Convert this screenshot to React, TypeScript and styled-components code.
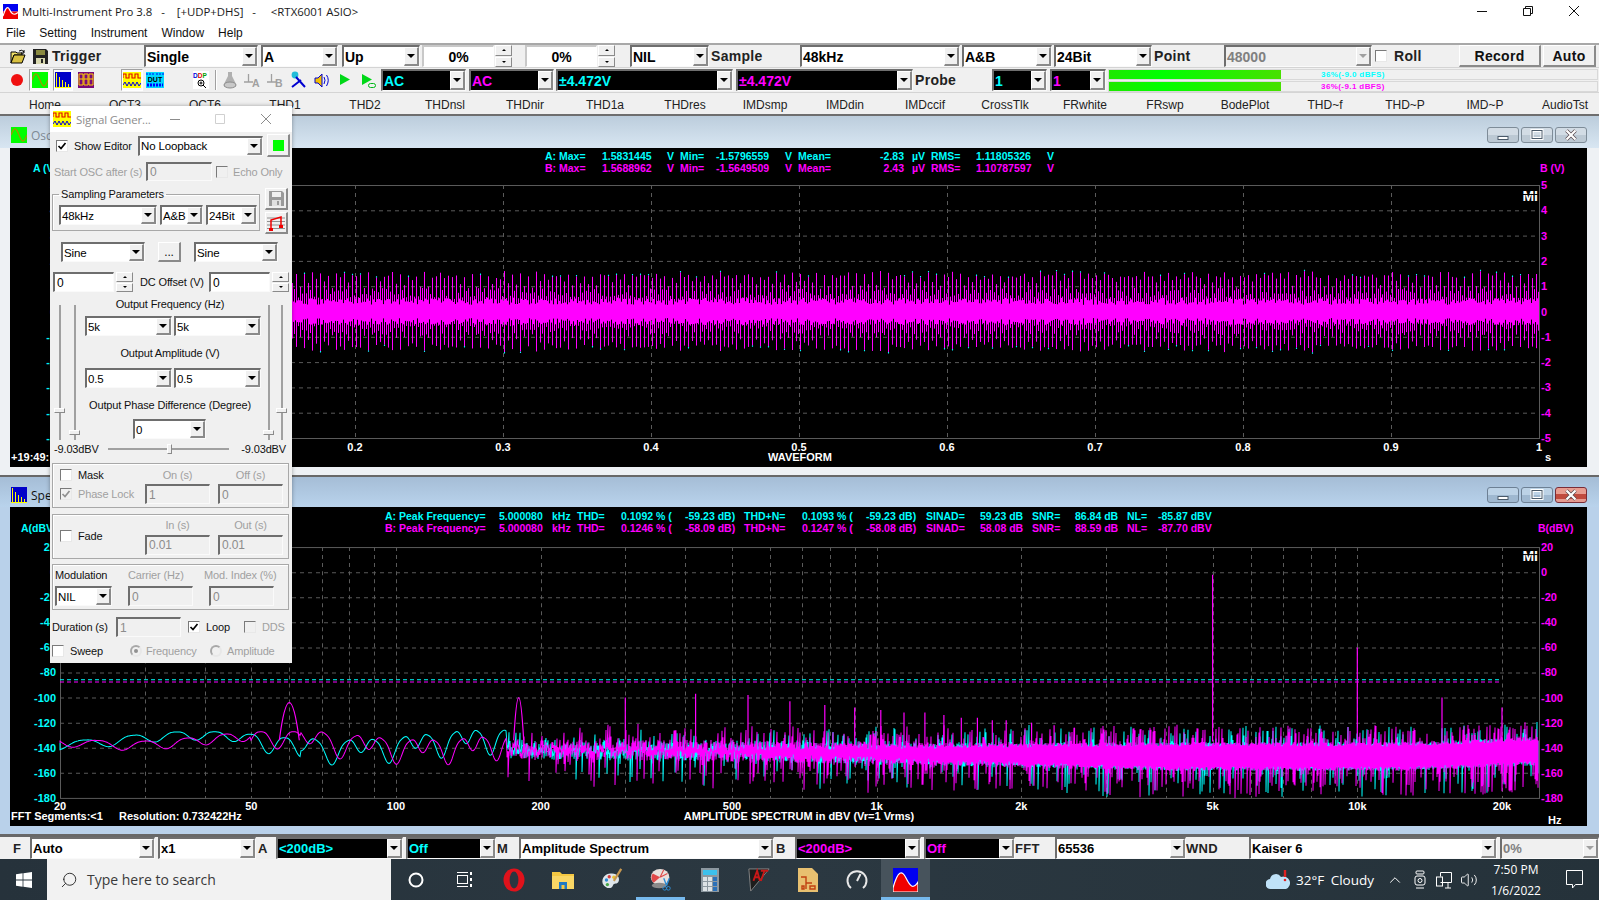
import React from 'react';
import styled, { createGlobalStyle, css } from 'styled-components';
import { Search, ChevronUp, Volume2 } from 'lucide-react';

const GlobalStyle = createGlobalStyle`
  html, body { margin: 0; padding: 0; background: #f0f0f0; }
  * { box-sizing: border-box; }
`;

const UI = '"Liberation Sans", Arial, sans-serif';
const SEGOE = '"Open Sans", "Noto Sans", sans-serif';
const CYAN = '#00ffff';
const MAGENTA = '#ff00ff';

const sunken = css`
  border-style: solid;
  border-width: 2px 1px 1px 2px;
  border-color: #6e6e6e #fafafa #fafafa #6e6e6e;
`;
const raised = css`
  border-style: solid;
  border-width: 1px 2px 2px 1px;
  border-color: #fff #8a8a8a #8a8a8a #fff;
  background: #f0f0f0;
`;

const Page = styled.div`
  width: 1599px;
  height: 900px;
  overflow: hidden;
  position: relative;
  display: flex;
  flex-direction: column;
  font-family: ${UI};
  color: #111;
  background: #f0f0f0;
`;

/* ---------- title + menu ---------- */
const TitleBar = styled.div`
  height: 22px;
  background: #fff;
  display: flex;
  align-items: center;
  padding-left: 3px;
`;
const TitleText = styled.span`
  font: 11.4px ${SEGOE};
  margin-left: 4px;
  white-space: pre;
  color: #1a1a1a;
`;
const CaptionButtons = styled.div`
  margin-left: auto;
  margin-right: 2px;
  display: flex;
`;
const CaptionButton = styled.div`
  width: 46px;
  height: 22px;
  display: flex;
  align-items: center;
  justify-content: center;
`;
const MenuBar = styled.div`
  height: 21px;
  flex: none;
  background: #fff;
  display: flex;
  align-items: center;
  gap: 14px;
  padding-left: 6px;
  font-size: 12px;
`;

/* ---------- tool rows ---------- */
const ToolRow = styled.div<{ $line?: string; $h: number }>`
  height: ${p => p.$h}px;
  flex: none;
  display: flex;
  align-items: center;
  background: #f0f0f0;
  border-top: ${p => p.$line || '1px solid #d4d4d4'};
  white-space: nowrap;
`;
const TabRow = styled.div`
  height: 24px;
  flex: none;
  display: grid;
  grid-template-columns: repeat(20, 80px);
  padding: 3px 0 0 5px;
  align-items: center;
  background: #f0f0f0;
  border-top: 1px solid #d4d4d4;
  border-bottom: 2px solid #6e6e6e;
  font-size: 12px;
  text-align: center;
  color: #222;
  overflow: hidden;
`;
const BarLabel = styled.div<{ $w: number; $ml?: number; $size?: number }>`
  width: ${p => p.$w}px;
  margin-left: ${p => p.$ml || 0}px;
  flex: none;
  font-size: ${p => p.$size || 14}px;
  font-weight: bold;
  letter-spacing: 0.3px;
  color: #222;
`;
const IconCell = styled.div<{ $w: number; $ml?: number; $on?: boolean }>`
  width: ${p => p.$w}px;
  height: 22px;
  margin-left: ${p => p.$ml || 0}px;
  flex: none;
  display: flex;
  align-items: center;
  justify-content: center;
  ${p => p.$on && css`
    border: 1px solid;
    border-color: #a0a0a0 #fff #fff #a0a0a0;
    background: #fafafa;
  `}
`;
const ToolSep = styled.div<{ $ml: number }>`
  width: 2px;
  height: 20px;
  margin-left: ${p => p.$ml}px;
  flex: none;
  border-left: 1px solid #a0a0a0;
  border-right: 1px solid #fff;
`;

/* ---------- windows widgets ---------- */
const ComboBox = styled.div<{ $w: number; $h: number; $ml: number; $dark?: boolean; $off?: boolean }>`
  width: ${p => p.$w}px;
  height: ${p => p.$h}px;
  margin-left: ${p => p.$ml}px;
  flex: none;
  display: flex;
  ${sunken}
  background: ${p => (p.$dark ? '#000' : p.$off ? '#f0f0f0' : '#fff')};
`;
const ComboText = styled.div<{ $color: string; $fs: number; $bold: boolean }>`
  flex: 1;
  min-width: 0;
  padding-left: 1px;
  display: flex;
  align-items: center;
  overflow: hidden;
  white-space: nowrap;
  font-size: ${p => p.$fs}px;
  font-weight: ${p => (p.$bold ? 'bold' : 'normal')};
  color: ${p => p.$color};
`;
const ComboButton = styled.div`
  width: 15px;
  flex: none;
  display: flex;
  align-items: center;
  justify-content: center;
  ${raised}
`;
const Caret = styled.i<{ $up?: boolean; $off?: boolean; $s?: number }>`
  width: 0;
  height: 0;
  border-left: ${p => p.$s || 4}px solid transparent;
  border-right: ${p => p.$s || 4}px solid transparent;
  ${p => (p.$up ? 'border-bottom' : 'border-top')}: ${p => p.$s || 4}px solid ${p => (p.$off ? '#a0a0a0' : '#000')};
`;

type ComboProps = {
  w: number; ml?: number; h?: number; fs?: number; bold?: boolean;
  color?: string; dark?: boolean; off?: boolean; children: React.ReactNode;
};
const Combo = ({ w, ml = 0, h = 22, fs = 14, bold = true, color, dark, off, children }: ComboProps) => (
  <ComboBox $w={w} $h={h} $ml={ml} $dark={dark} $off={off}>
    <ComboText $color={color || (off ? '#808080' : '#000')} $fs={fs} $bold={bold}>{children}</ComboText>
    <ComboButton><Caret $off={off} /></ComboButton>
  </ComboBox>
);
const DCombo = (p: ComboProps) => <Combo h={20} fs={11.5} bold={false} {...p} />;

const EditBox = styled.div<{ $w: number; $h?: number; $ml?: number; $off?: boolean; $big?: boolean }>`
  width: ${p => p.$w}px;
  height: ${p => p.$h || 20}px;
  margin-left: ${p => p.$ml || 0}px;
  flex: none;
  display: flex;
  align-items: center;
  justify-content: ${p => (p.$big ? 'center' : 'flex-start')};
  padding-left: ${p => (p.$big ? 0 : 2)}px;
  font-size: ${p => (p.$big ? 14 : 12)}px;
  font-weight: ${p => (p.$big ? 'bold' : 'normal')};
  color: ${p => (p.$off ? '#8c8c8c' : '#000')};
  background: ${p => (p.$off ? '#f0f0f0' : '#fff')};
  ${sunken}
  ${p => p.$big && css`
    border-color: #c8c8c8 #fff #fff #c8c8c8;
  `}
`;
const SpinWrap = styled.div<{ $ml?: number; $h?: number }>`
  width: 17px;
  height: ${p => p.$h || 20}px;
  margin-left: ${p => p.$ml || 0}px;
  flex: none;
  display: flex;
  flex-direction: column;
  gap: 1px;
`;
const SpinPart = styled.div`
  flex: 1;
  display: flex;
  align-items: center;
  justify-content: center;
  ${raised}
  border-width: 1px;
`;
const Spin = ({ ml, h }: { ml?: number; h?: number }) => (
  <SpinWrap $ml={ml} $h={h}>
    <SpinPart><Caret $up $s={2} /></SpinPart>
    <SpinPart><Caret $s={2} /></SpinPart>
  </SpinWrap>
);
const PushButton = styled.div<{ $w: number; $h?: number; $ml?: number; $mt?: number; $size?: number }>`
  width: ${p => p.$w}px;
  height: ${p => p.$h || 22}px;
  margin-left: ${p => p.$ml || 0}px;
  margin-top: ${p => p.$mt || 0}px;
  flex: none;
  display: flex;
  align-items: center;
  justify-content: center;
  font-size: ${p => p.$size || 12}px;
  ${raised}
`;
const BoldButton = styled(PushButton)`
  font-size: 14px;
  font-weight: bold;
  letter-spacing: 0.3px;
`;
const CheckBox = styled.div<{ $ml?: number; $off?: boolean }>`
  width: 12px;
  height: 12px;
  margin-left: ${p => p.$ml || 0}px;
  flex: none;
  display: flex;
  align-items: center;
  justify-content: center;
  background: ${p => (p.$off ? '#f0f0f0' : '#fff')};
  border: 1px solid;
  border-color: #7a7a7a #e8e8e8 #e8e8e8 #7a7a7a;
`;
const Check = ({ ml, off, on }: { ml?: number; off?: boolean; on?: boolean }) => (
  <CheckBox $ml={ml} $off={off}>
    {on && (
      <svg width="10" height="10" viewBox="0 0 10 10">
        <path d="M1.5 5 L4 7.5 L8.5 2" fill="none" stroke={off ? '#909090' : '#000'} strokeWidth="1.7" />
      </svg>
    )}
  </CheckBox>
);
const RadioDot = styled.div<{ $ml?: number }>`
  width: 12px;
  height: 12px;
  margin-left: ${p => p.$ml || 0}px;
  flex: none;
  border-radius: 50%;
  border: 2px solid #a8a8a8;
  border-bottom-color: #e8e8e8;
  border-right-color: #e8e8e8;
  display: flex;
  align-items: center;
  justify-content: center;
  i {
    width: 4px;
    height: 4px;
    border-radius: 50%;
    background: #909090;
  }
`;

/* ---------- level meter ---------- */
const Meter = styled.div`
  width: 490px;
  height: 22px;
  margin-left: 2px;
  flex: none;
  display: flex;
  flex-direction: column;
  gap: 1px;
`;
const MeterRow = styled.div<{ $fill: number; $color: string }>`
  flex: 1;
  display: flex;
  align-items: center;
  justify-content: center;
  font: bold 8px ${UI};
  letter-spacing: 0.4px;
  color: ${p => p.$color};
  border: 1px solid #d8d8d8;
  background: linear-gradient(90deg, #1ee800, #00ff00 30%, #48e000) no-repeat;
  background-size: ${p => p.$fill}px 100%;
  background-color: #f0f0f0;
`;

/* ---------- MDI child windows ---------- */
const Mdi = styled.div`
  height: 721px;
  flex: none;
  display: flex;
  flex-direction: column;
  gap: 2px;
  padding-bottom: 3px;
  background: #686868;
`;
const Child = styled.div<{ $h: number; $frame: string }>`
  height: ${p => p.$h}px;
  flex: none;
  display: flex;
  flex-direction: column;
  padding: 0 12px 8px 10px;
  background: ${p => p.$frame};
`;
const ChildTitle = styled.div<{ $h: number; $bg: string }>`
  height: ${p => p.$h}px;
  flex: none;
  margin: 0 -12px 0 -10px;
  padding: 6px 12px 0 11px;
  display: flex;
  align-items: center;
  gap: 4px;
  background: ${p => p.$bg};
`;
const ChildName = styled.span<{ $dim?: boolean }>`
  font: 12px ${SEGOE};
  color: ${p => (p.$dim ? '#7f8a94' : '#111')};
`;
const WinButtons = styled.div`
  margin-left: auto;
  display: flex;
  gap: 2px;
`;
const WinButton = styled.div<{ $close?: boolean; $dim?: boolean }>`
  width: 32px;
  height: 16px;
  border-radius: 3px;
  border: 1px solid ${p => (p.$close ? '#7a2c36' : p.$dim ? '#7e8c98' : '#6d8094')};
  display: flex;
  align-items: center;
  justify-content: center;
  background: ${p =>
    p.$close
      ? 'linear-gradient(#e89c90 0 45%, #c04a3e 45% 75%, #e59a90 75%)'
      : p.$dim
      ? 'linear-gradient(#d2dce5 0 50%, #bcc9d4 50%)'
      : 'linear-gradient(#bcd2e6 0 50%, #9fb8d0 50%)'};
`;
const Scope = styled.div`
  flex: 1;
  min-height: 0;
  display: flex;
  flex-direction: column;
  background: #000;
  padding-top: 2px;
`;
const SpecScope = styled(Scope)`
  padding-top: 3px;
`;
const StatLine = styled.div<{ $cols: string; $color: string }>`
  height: 12px;
  flex: none;
  display: grid;
  grid-template-columns: ${p => p.$cols};
  align-items: center;
  font: bold 10.5px ${UI};
  color: ${p => p.$color};
  white-space: nowrap;
`;
const Stat = styled.span<{ $c?: string; $right?: boolean; $pl?: number }>`
  ${p => (p.$c ? `color: ${p.$c};` : '')}
  ${p => p.$right && 'text-align: right; padding-right: 8px;'}
  ${p => (p.$pl ? `padding-left: ${p.$pl}px;` : '')}
`;
const Plot = styled.svg`
  flex: 1;
  min-height: 0;
  display: block;
  width: 100%;
`;
const Tick = styled.text<{ $c?: string; $anchor?: string; $s?: number }>`
  font: bold ${p => p.$s || 11}px ${UI};
  fill: ${p => p.$c || '#fff'};
  text-anchor: ${p => p.$anchor || 'middle'};
`;

/* ---------- floating signal generator ---------- */
const Dialog = styled.div`
  position: absolute;
  left: 50px;
  top: 106px;
  width: 242px;
  height: 557px;
  background: #f0f0f0;
  font-size: 11px;
  letter-spacing: -0.15px;
  color: #111;
  box-shadow: 0 0 4px rgba(0, 0, 0, 0.35);
  display: flex;
  flex-direction: column;
`;
const DialogTitle = styled.div`
  height: 26px;
  flex: none;
  background: #fff;
  display: flex;
  align-items: center;
  padding-left: 3px;
`;
const DialogName = styled.span`
  font: 11.5px ${SEGOE};
  color: #8c8c8c;
  margin-left: 5px;
  width: 85px;
`;
const DialogCaption = styled.div<{ $w: number }>`
  width: ${p => p.$w}px;
  display: flex;
  justify-content: center;
`;
const DRow = styled.div<{ $h: number; $mt?: number; $pr?: number; $top?: boolean }>`
  height: ${p => p.$h}px;
  margin-top: ${p => p.$mt || 0}px;
  padding-right: ${p => p.$pr || 0}px;
  flex: none;
  display: flex;
  align-items: ${p => (p.$top ? 'flex-start' : 'center')};
  white-space: nowrap;
`;
const DLabel = styled.span<{ $w?: number; $ml?: number; $dim?: boolean; $center?: boolean; $auto?: boolean }>`
  ${p => (p.$w ? `width: ${p.$w}px; flex: none;` : '')}
  margin-left: ${p => (p.$auto ? 'auto' : `${p.$ml || 0}px`)};
  color: ${p => (p.$dim ? '#a0a0a0' : '#111')};
  ${p => p.$center && 'text-align: center;'}
`;
const Fieldset = styled.fieldset`
  width: 208px;
  height: 43px;
  margin: 0 0 0 2px;
  padding: 4px 0 0 6px;
  flex: none;
  border: 1px solid #a8a8a8;
  box-shadow: inset 1px 1px 0 #fff;
  display: flex;
  legend {
    margin-left: 0;
    padding: 0 2px;
    line-height: 13px;
  }
`;
const FieldRow = styled.div`
  display: flex;
`;
const ButtonStack = styled.div`
  margin-left: 5px;
  display: flex;
  flex-direction: column;
`;
const Mid = styled.div`
  height: 145px;
  margin-top: 5px;
  flex: none;
  display: flex;
`;
const SliderPair = styled.div<{ $w: number; $start: number; $gap: number }>`
  width: ${p => p.$w}px;
  flex: none;
  padding: 8px 0 0 ${p => p.$start}px;
  display: flex;
  gap: ${p => p.$gap}px;
`;
const VTrack = styled.div`
  width: 2px;
  height: 135px;
  position: relative;
  background: #a0a0a0;
`;
const Thumb = styled.i<{ $pos: number }>`
  position: absolute;
  left: -5px;
  top: ${p => p.$pos}px;
  width: 11px;
  height: 5px;
  ${raised}
  border-width: 1px;
`;
const HTrack = styled.div`
  width: 121px;
  height: 2px;
  margin-left: 11px;
  flex: none;
  position: relative;
  background: #a0a0a0;
`;
const HThumb = styled.i`
  position: absolute;
  left: 59px;
  top: -4px;
  width: 5px;
  height: 10px;
  ${raised}
  border-width: 1px;
`;
const MidCenter = styled.div`
  width: 176px;
  flex: none;
  display: flex;
  flex-direction: column;
  align-items: center;
`;
const MidLabel = styled.div<{ $mt: number }>`
  height: 14px;
  margin-top: ${p => p.$mt}px;
  margin-right: 6px;
  line-height: 14px;
  white-space: nowrap;
`;
const ComboPair = styled.div<{ $mt: number }>`
  width: 176px;
  margin-top: ${p => p.$mt}px;
  display: flex;
  gap: 2px;
`;
const Group = styled.div<{ $mt: number; $h: number; $cols: string; $rows: string; $pt: number; $gap?: number }>`
  width: 237px;
  height: ${p => p.$h}px;
  margin: ${p => p.$mt}px 0 0 2px;
  padding-top: ${p => p.$pt}px;
  flex: none;
  border: 1px solid #a8a8a8;
  box-shadow: inset 1px 1px 0 #fff;
  display: grid;
  grid-template-columns: ${p => p.$cols};
  grid-template-rows: ${p => p.$rows};
  row-gap: ${p => p.$gap || 0}px;
  align-items: center;
  white-space: nowrap;
`;
const Cell = styled.div<{ $span?: boolean; $center?: boolean; $dim?: boolean }>`
  display: flex;
  align-items: center;
  ${p => p.$span && 'grid-row: 1 / span 2;'}
  ${p => p.$center && 'justify-content: center; width: 65px;'}
  ${p => p.$dim && 'color: #a0a0a0;'}
`;

/* ---------- bottom bar + taskbar ---------- */
const BottomBar = styled.div`
  height: 22px;
  flex: none;
  display: flex;
  align-items: center;
  background: #f0f0f0;
  white-space: nowrap;
`;
const Taskbar = styled.div`
  height: 41px;
  flex: none;
  display: flex;
  align-items: stretch;
  background: linear-gradient(90deg, #26323b, #2b3841 50%, #25323a);
  color: #fff;
`;
const StartCell = styled.div`
  width: 47px;
  flex: none;
  display: flex;
  align-items: center;
  justify-content: center;
`;
const SearchBox = styled.div`
  width: 344px;
  flex: none;
  display: flex;
  align-items: center;
  padding-left: 13px;
  gap: 9px;
  background: #f2f2f2;
  font: 14px ${SEGOE};
  color: #3a3a3a;
`;
const TaskCell = styled.div<{ $active?: boolean; $lit?: boolean }>`
  width: 49px;
  flex: none;
  display: flex;
  align-items: center;
  justify-content: center;
  background: ${p => (p.$lit ? '#47535c' : 'transparent')};
  border-bottom: 3px solid ${p => (p.$active ? '#76b9ed' : 'transparent')};
  padding-top: 3px;
`;
const Tray = styled.div`
  margin-left: auto;
  display: flex;
  align-items: center;
`;
const TrayText = styled.span`
  font: 13.5px ${SEGOE};
  margin-left: 6px;
  word-spacing: 3px;
`;
const TrayIcon = styled.div<{ $ml: number }>`
  margin-left: ${p => p.$ml}px;
  display: flex;
  align-items: center;
`;
const Clock = styled.div`
  width: 76px;
  font: 12px ${SEGOE};
  text-align: center;
  line-height: 21px;
`;
const NotifyCell = styled.div`
  width: 41px;
  display: flex;
  justify-content: center;
  margin-right: 4px;
`;

/* ---------- icons ---------- */
const MiLogo = ({ size = 15 }: { size?: number }) => (
  <svg width={size} height={size} viewBox="0 0 16 16">
    <rect width="16" height="8" fill="#0000f0" />
    <rect y="8" width="16" height="8" fill="#f00000" />
    <path d="M0 13 C3 3 5 2 7 6 S11 13 16 9 V16 H0Z" fill="#f00000" />
    <path d="M0 13 C3 3 5 2 7 6 S11 13 16 9" fill="none" stroke="#fff" strokeWidth="1.2" />
  </svg>
);
const OscIcon = () => (
  <svg width="16" height="16" viewBox="0 0 16 16">
    <rect width="16" height="16" fill="#00ff00" />
    <path d="M0 8 C3 0 5 0 8 8 S13 16 16 8" fill="none" stroke="#9a9a00" strokeWidth="1.3" />
  </svg>
);
const SpecIcon = () => (
  <svg width="16" height="16" viewBox="0 0 16 16">
    <rect width="16" height="16" fill="#0000c8" />
    <path d="M1.5 15V1M4.5 15V5M7.5 15V8M10.5 15V10M13.5 15V12M0 15.5H16" stroke="#ffff00" strokeWidth="1" />
  </svg>
);
const SgramIcon = () => (
  <svg width="16" height="16" viewBox="0 0 16 16">
    <rect width="16" height="16" fill="#7a0a7a" />
    <path d="M1 2h4v5H1zM1 7v6h4V7M6 2h4v5H6zM6 7v6h4V7M11 2h4v5h-4zM11 7v6h4V7" fill="none" stroke="#ffd000" strokeWidth="1" />
  </svg>
);
const GenIcon = () => (
  <svg width="18" height="16" viewBox="0 0 18 16">
    <rect width="18" height="16" fill="#ffff00" />
    <path d="M0 6V2h3v4h3V2h3v4h3V2h3v4h3" fill="none" stroke="#e00000" strokeWidth="1.1" />
    <path d="M0 13l2-3 2 4 2-4 2 4 2-4 2 4 2-4 2 4 2-3" fill="none" stroke="#0000e0" strokeWidth="1" />
  </svg>
);
const DutIcon = () => (
  <svg width="18" height="16" viewBox="0 0 18 16">
    <rect width="18" height="16" fill="#00d8ff" />
    <path d="M1 1v2M4 1v2M7 1v2M11 1v2M14 1v2M17 1v2" stroke="#00f" />
    <text x="9" y="10" fontSize="7" fontWeight="bold" fontFamily={UI} fill="#000" textAnchor="middle">DUT</text>
    <path d="M1 13h16" stroke="#00f" strokeDasharray="2 1" strokeWidth="3" />
  </svg>
);
const DdpIcon = () => (
  <svg width="16" height="18" viewBox="0 0 16 18">
    <rect width="16" height="18" fill="#fff" />
    <text x="0" y="7" fontSize="6.5" fontWeight="bold" fontFamily={UI}><tspan fill="#0000e0">D</tspan><tspan fill="#e00000">D</tspan><tspan fill="#00a000">P</tspan></text>
    <circle cx="8" cy="12" r="3" fill="none" stroke="#000" />
    <path d="M6.5 12h3M8 10.5v3M10 14l3 3" stroke="#000" />
  </svg>
);
const FunnelIcon = () => (
  <svg width="14" height="18" viewBox="0 0 14 18">
    <path d="M5 1h4v4l4 8v3H1v-3l4-8z" fill="#b0b0b0" />
    <ellipse cx="7" cy="14" rx="6" ry="3" fill="#c8c8c8" stroke="#8c8c8c" />
  </svg>
);
const TrigIcon = ({ name }: { name: string }) => (
  <svg width="18" height="16" viewBox="0 0 18 16">
    <path d="M0 10h9M4.5 2v8" stroke="#a0a0a0" strokeWidth="1.3" fill="none" />
    <text x="8" y="15" fontSize="10.5" fontWeight="bold" fontFamily={UI} fill="#a0a0a0">{name}</text>
  </svg>
);
const ProbeIcon = () => (
  <svg width="16" height="18" viewBox="0 0 16 18">
    <circle cx="4" cy="4" r="3.4" fill="#22bcd8" />
    <path d="M5 6L14 16M1 16L10 9" stroke="#0000d0" strokeWidth="2" />
  </svg>
);
const SpeakerIcon = () => (
  <svg width="17" height="17" viewBox="0 0 17 17">
    <path d="M1 6h3l4-4v13l-4-4H1z" fill="#f4c000" stroke="#0000d0" />
    <path d="M10 5q2 3 0 7M12.5 3q3.5 5 0 11" stroke="#0000d0" fill="none" />
  </svg>
);
const PlayIcon = ({ loop }: { loop?: boolean }) => (
  <svg width="15" height="16" viewBox="0 0 15 16">
    <path d="M1 2l10 5.5L1 13z" fill="#00d818" />
    {loop && <rect x="7.5" y="11.5" width="7" height="4" rx="2" fill="none" stroke="#00b818" />}
  </svg>
);
const FolderOpenIcon = () => (
  <svg width="16" height="15" viewBox="0 0 16 15">
    <path d="M1 3h5l1 1h5v2H4L1 14z" fill="#f0e068" stroke="#000" />
    <path d="M1 14l3-8h11l-3 8z" fill="#d8c040" stroke="#000" />
    <path d="M9 2q3-2 5 1M14 1v3h-3" fill="none" stroke="#000" />
  </svg>
);
const SaveIcon = ({ dim }: { dim?: boolean }) => {
  const c = dim ? '#9a9a9a' : '#222';
  return (
    <svg width="15" height="15" viewBox="0 0 15 15">
      <path d="M0 0h13l2 2v13H0z" fill={c} />
      <rect x="3" y="1" width="9" height="5" fill={dim ? '#f0f0f0' : '#8a8a40'} />
      <rect x="3" y="9" width="9" height="6" fill={dim ? '#e0e0e0' : '#d8d8b0'} />
      <rect x="8" y="10" width="2" height="4" fill={c} />
    </svg>
  );
};
const NotesIcon = () => (
  <svg width="18" height="18" viewBox="0 0 18 18">
    <path d="M0 4h18M0 7.5h18M0 11h18M0 14.5h18" stroke="#909090" />
    <path d="M4 15V6L14 3v9" fill="none" stroke="#f00000" strokeWidth="1.5" />
    <rect x="2" y="14" width="4" height="3" fill="#f00000" />
    <rect x="12" y="11" width="4" height="3" fill="#f00000" />
  </svg>
);
const Glyph = ({ d, c = '#111', s = 10 }: { d: string; c?: string; s?: number }) => (
  <svg width={s} height={s} viewBox="0 0 10 10">
    <path d={d} fill="none" stroke={c} strokeWidth="1" />
  </svg>
);
const WindowsLogo = () => (
  <svg width="16" height="16" viewBox="0 0 16 16">
    <path d="M0 2.2L6.6 1.3V7.6H0zM7.4 1.2L16 0V7.6H7.4zM0 8.4H6.6V14.7L0 13.8zM7.4 8.4H16V16L7.4 14.8z" fill="#fff" />
  </svg>
);
const TaskView = () => (
  <svg width="17" height="17" viewBox="0 0 17 17">
    <path d="M1 1.5h11M1 15.5h11" stroke="#fff" fill="none" />
    <rect x="1.5" y="4.5" width="10" height="8" fill="none" stroke="#fff" />
    <path d="M15 1v3M15 7v3M15 13v3" stroke="#fff" strokeWidth="2" />
  </svg>
);
const Opera = () => (
  <svg width="22" height="24" viewBox="0 0 22 24">
    <ellipse cx="11" cy="12" rx="10.500" ry="11.500" fill="#e0121b" />
    <ellipse cx="11" cy="12" rx="4.400" ry="8.500" fill="#2a3640" />
  </svg>
);
const FolderApp = () => (
  <svg width="22" height="20" viewBox="0 0 22 20">
    <path d="M0 2h8l2 2h12v15H0z" fill="#f5c842" />
    <path d="M0 6h22v13H0z" fill="#fad765" />
    <rect x="7" y="12" width="8" height="7" fill="#1f7ac4" />
    <rect x="9.5" y="15" width="3" height="4" fill="#f5c842" />
  </svg>
);
const Palette = () => (
  <svg width="24" height="24" viewBox="0 0 24 26">
    <path d="M2 17C0 10 6 5 12 6c6 0 9 5 7 9-1 3-5 1-6 4-1 4-8 4-11-2z" fill="#dfe6ea" />
    <circle cx="6" cy="13" r="1.8" fill="#2c8ad4" />
    <circle cx="9" cy="9.5" r="1.8" fill="#d43c3c" />
    <circle cx="14" cy="10" r="1.8" fill="#e8c030" />
    <circle cx="7" cy="18" r="1.8" fill="#48a848" />
    <path d="M22 1L14 14" stroke="#c89850" strokeWidth="2.4" />
  </svg>
);
const Snip = () => (
  <svg width="24" height="24" viewBox="0 0 24 26">
    <ellipse cx="11" cy="10" rx="10" ry="9" fill="#e8e0dc" />
    <path d="M11 10L4 16A10 9 0 0 1 3 6z" fill="#e04848" />
    <path d="M11 10L15 2M11 10L19 6" stroke="#e04848" strokeWidth="1.2" />
    <ellipse cx="10" cy="19" rx="8" ry="3" fill="#8a8a8a" />
    <path d="M15 11l3 8M21 11l-3 8" stroke="#2f8fd8" strokeWidth="1.5" />
    <circle cx="16" cy="22" r="2" fill="none" stroke="#2f8fd8" />
    <circle cx="20" cy="22" r="2" fill="none" stroke="#2f8fd8" />
  </svg>
);
const Calc = () => (
  <svg width="18" height="24" viewBox="0 0 18 24">
    <rect width="18" height="24" fill="#8c98a0" />
    <rect x="2" y="2" width="14" height="5" fill="#3cc0ec" />
    <g fill="#dde3e6">
      {[9, 14, 19].map(y => [2, 7, 12].map(x => <rect key={`${x}${y}`} x={x} y={y} width="4" height="4" fill={x === 12 ? '#2a70b8' : undefined} />))}
    </g>
  </svg>
);
const RedAt = () => (
  <svg width="24" height="24" viewBox="0 0 24 26">
    <path d="M1 1H23L3 25Z" fill="#1c1c1c" stroke="#888" />
    <path d="M6 14L10 3L13 14M7.500 10h5M14 3h8M18 3L14 14" stroke="#c81818" strokeWidth="2" fill="none" />
  </svg>
);
const DocApp = () => (
  <svg width="20" height="24" viewBox="0 0 20 24">
    <path d="M0 0h14l6 6v18H0z" fill="#e8c070" />
    <path d="M3 9h5v6h6M8 15v6M12 18h5v3h-5zM4 18h2v3H4z" stroke="#c04010" fill="none" strokeWidth="1.4" />
  </svg>
);
const Gauge = () => (
  <svg width="22" height="24" viewBox="0 0 22 24">
    <path d="M5 20A9.500 9.500 0 1 1 17 20" fill="none" stroke="#e8e8e8" strokeWidth="2" />
    <path d="M11 13L14.500 6" stroke="#e8e8e8" strokeWidth="2" />
  </svg>
);
const MiTask = () => (
  <svg width="25" height="24" viewBox="0 0 25 24">
    <rect width="25" height="24" fill="#0000f0" />
    <path d="M0 20C5 2 9 2 13 10S20 22 25 14V24H0Z" fill="#f00000" stroke="#fff" strokeWidth="1.2" />
  </svg>
);
const CloudIcon = () => (
  <svg width="24" height="22" viewBox="0 0 24 22">
    <path d="M5 20a5 5 0 0 1-1-10 6 6 0 0 1 11-2 6 6 0 0 1 5 12z" fill="#bfe2f8" />
    <path d="M19 1v7" stroke="#e02020" strokeWidth="2.4" />
    <circle cx="19" cy="11" r="1.300" fill="#e02020" />
  </svg>
);
const CameraTray = () => (
  <svg width="14" height="20" viewBox="0 0 14 20">
    <rect x="3" y="1" width="8" height="3" rx="1" fill="none" stroke="#fff" />
    <rect x="2" y="6" width="10" height="9" rx="2" fill="none" stroke="#fff" />
    <circle cx="7" cy="10.500" r="2" fill="none" stroke="#fff" />
    <path d="M3 18h8" stroke="#fff" />
  </svg>
);
const NetTray = () => (
  <svg width="18" height="18" viewBox="0 0 18 18">
    <path d="M5.500 1.500h11v10h-11M5.500 1.500v4M10 17h6M13 12v5" fill="none" stroke="#fff" />
    <rect x="1.500" y="6" width="6" height="9" fill="none" stroke="#fff" />
  </svg>
);
const NotifyIcon = () => (
  <svg width="17" height="19" viewBox="0 0 17 19">
    <path d="M.5.500h16v14h-7l-3 3.500v-3.500h-6z" fill="none" stroke="#fff" />
  </svg>
);

/* ---------- chart data ---------- */
const makeRng = (seed: number) => () => {
  seed = (seed + 0x6d2b79f5) | 0;
  let t = Math.imul(seed ^ (seed >>> 15), 1 | seed);
  t = (t + Math.imul(t ^ (t >>> 7), 61 | t)) ^ t;
  return ((t ^ (t >>> 14)) >>> 0) / 4294967296;
};

const OX0 = 59;
const OX1 = 1539;
const OY0 = 185;
const OY1 = 438;
const OMID = (OY0 + OY1) / 2;
const OSTEP = (OY1 - OY0) / 10;

const buildWave = () => {
  const r = makeRng(11);
  let body = '';
  let tips = '';
  for (let x = OX0 + 1; x < OX1; x++) {
    const k = x % 8;
    const tall = k === 0;
    const amp = tall ? 35 + r() * 6 : k === 4 ? 24 + r() * 14 : k % 2 === 0 ? 13 + r() * 11 : 7 + r() * 7;
    const up = amp * (0.93 + r() * 0.07);
    const dn = amp * (0.93 + r() * 0.07);
    body += `M${x + 0.5} ${(OMID - up).toFixed(1)}V${(OMID + dn).toFixed(1)}`;
    if (tall && r() < 0.55) {
      const top = r() < 0.5;
      tips += top ? `M${x + 0.5} ${(OMID - up - 1.5).toFixed(1)}v1.5` : `M${x + 0.5} ${(OMID + dn).toFixed(1)}v1.5`;
    }
  }
  return { body, tips };
};
const WAVE = buildWave();

const SX0 = 60;
const SX1 = 1539;
const SY0 = 547;
const SY1 = 797;
const OCT = 144.7;
const fx = (f: number) => SX0 + Math.log2(f / 20) * OCT;
const dy = (db: number) => Math.min(SY1, SY0 + (20 - db) * 1.25);

const buildSpectrum = (seed: number, spiky: number) => {
  const r = makeRng(seed);
  let d = `M${SX0} ${dy(-136).toFixed(1)}`;
  for (let x = SX0; x < SX1; x++) {
    const f = 20 * 2 ** ((x - SX0) / OCT);
    if (f < 170) {
      const lobe = Math.sin(x * (0.045 + x * 0.00009) + seed);
      const deep = x > 250 ? 14 : 7;
      const db = -131 - deep * Math.abs(lobe) ** 3 + 4 * Math.sin(x * 0.021 + seed * 2) + (x > 300 ? 5 * lobe : 0);
      d += `L${x} ${dy(db).toFixed(1)}`;
      continue;
    }
    // loose lines near 200 Hz, a solid band by a few kHz, with spikes both ways
    const t = Math.min(1, Math.log2(f / 170) / Math.log2(4000 / 170));
    const rise = f > 12000 ? Math.min(4, (f - 12000) / 2500) : 0;
    const level = -141 - 6 * t + rise + (r() - 0.5) * 12 * (1 - t);
    const half = 2 + 9.5 * t;
    const chance = (0.12 + 0.2 * t) * spiky;
    let top = level + half * (0.7 + 0.3 * r());
    let bot = level - half * (0.7 + 0.3 * r());
    if (r() < chance) top += 3 + r() * 11;
    if (r() < chance) bot -= 3 + r() * 20;
    d += `L${x} ${dy(top).toFixed(1)}L${x} ${dy(Math.max(bot, -180)).toFixed(1)}`;
  }
  return d;
};
const SPEC_CYAN = buildSpectrum(5, 0.55);
const SPEC_MAGENTA = buildSpectrum(23, 1);

const HARMONICS: [number, number][] = [
  [300, -100], [420, -97], [540, -98], [660, -103], [780, -106], [900, -108],
  [1020, -110], [1140, -112], [1260, -112], [1380, -114], [1500, -116], [1620, -116], [1740, -118],
  [1860, -118], [2100, -120], [2340, -122], [2580, -124], [3000, -126],
];
const bell = (f: number, db: number, w: number) => {
  const x = fx(f);
  return `M${(x - w).toFixed(1)} ${dy(-134).toFixed(1)}Q${x.toFixed(1)} ${dy(db + (db + 134)).toFixed(1)} ${(x + w).toFixed(1)} ${dy(-134).toFixed(1)}`;
};
const SPIKES = [
  bell(60, -104, 10),
  bell(180, -100, 5),
  ...HARMONICS.map(([f, db]) => `M${fx(f).toFixed(1)} ${dy(db).toFixed(1)}V${dy(-138).toFixed(1)}`),
  `M${fx(5000).toFixed(1)} ${dy(-2)}V${dy(-135)}`,
  `M${fx(10000).toFixed(1)} ${dy(-60)}V${dy(-135)}`,
  `M${fx(15000).toFixed(1)} ${dy(-100)}V${dy(-138)}`,
  `M${fx(20000).toFixed(1)} ${dy(-108)}V${dy(-138)}`,
].join('');

const LOG_GRID = [30, 40, 50, 60, 70, 80, 90, 100, 200, 300, 400, 500, 600, 700, 800, 900, 1000, 2000, 3000, 4000, 5000, 6000, 7000, 8000, 9000, 10000, 20000];
const SPEC_X = [
  ['20', 20], ['50', 50], ['100', 100], ['200', 200], ['500', 500], ['1k', 1000], ['2k', 2000], ['5k', 5000], ['10k', 10000], ['20k', 20000],
] as const;
const DB_TICKS = [20, 0, -20, -40, -60, -80, -100, -120, -140, -160, -180];
const VOLT_TICKS = [5, 4, 3, 2, 1, 0, -1, -2, -3, -4, -5];
const TIME_TICKS = [0.1, 0.2, 0.3, 0.4, 0.5, 0.6, 0.7, 0.8, 0.9];
const TABS = ['Home', 'OCT3', 'OCT6', 'THD1', 'THD2', 'THDnsl', 'THDnir', 'THD1a', 'THDres', 'IMDsmp', 'IMDdin', 'IMDccif', 'CrossTlk', 'FRwhite', 'FRswp', 'BodePlot', 'THD~f', 'THD~P', 'IMD~P', 'AudioTst'];

// column widths from the readout start positions, page x minus the 10px frame
const colsFrom = (starts: number[]) =>
  starts.map((s, i) => `${(i + 1 < starts.length ? starts[i + 1] : 1587) - s}px`).join(' ');
const OSC_COLS = colsFrom([10, 545, 602, 667, 680, 716, 785, 798, 880, 912, 931, 976, 1047, 1540]);
const SPEC_COLS = colsFrom([10, 385, 499, 552, 577, 621, 685, 744, 802, 866, 926, 980, 1032, 1075, 1127, 1158, 1538]);

const OscRow = ({ color, vals, axis }: { color: string; vals: string[]; axis?: boolean }) => (
  <StatLine $cols={OSC_COLS} $color={color}>
    <Stat $c={CYAN} $pl={23}>{axis ? 'A (V)' : ''}</Stat>
    <Stat>{vals[0]}</Stat><Stat>{vals[1]}</Stat><Stat>V</Stat>
    <Stat>Min=</Stat><Stat>{vals[2]}</Stat><Stat>V</Stat>
    <Stat>Mean=</Stat><Stat $right>{vals[3]}</Stat><Stat>µV</Stat>
    <Stat>RMS=</Stat><Stat>{vals[4]}</Stat><Stat>V</Stat>
    <Stat>{axis ? 'B (V)' : ''}</Stat>
  </StatLine>
);
const SpecRow = ({ color, vals, axis }: { color: string; vals: string[]; axis?: boolean }) => (
  <StatLine $cols={SPEC_COLS} $color={color}>
    <Stat $c={CYAN} $pl={11}>{axis ? 'A(dBV)' : ''}</Stat>
    <Stat>{vals[0]} Peak Frequency=</Stat><Stat>5.000080</Stat><Stat>kHz</Stat>
    <Stat>THD=</Stat><Stat>{vals[1]} % (</Stat><Stat>{vals[2]} dB)</Stat>
    <Stat>THD+N=</Stat><Stat>{vals[3]} % (</Stat><Stat>{vals[4]} dB)</Stat>
    <Stat>SINAD=</Stat><Stat>{vals[5]} dB</Stat>
    <Stat>SNR=</Stat><Stat>{vals[6]} dB</Stat>
    <Stat>NL=</Stat><Stat>{vals[7]} dBV</Stat>
    <Stat>{axis ? 'B(dBV)' : ''}</Stat>
  </StatLine>
);

const MiMark = ({ x, y }: { x: number; y: number }) => (
  <g>
    <Tick x={x} y={y} $s={14} $anchor="end">MI</Tick>
    <path d={`M${x - 18} ${y - 6.500}H${x + 1}`} stroke="#000" />
  </g>
);

const OscPlot = () => (
  <Plot viewBox="10 174 1577 293" preserveAspectRatio="none">
    <g stroke="#5a5a5a" strokeDasharray="4 4" fill="none">
      {VOLT_TICKS.slice(1, -1).map((_, i) => (
        <path key={i} d={`M${OX0} ${OY0 + (i + 1) * OSTEP + 0.5}H${OX1}`} />
      ))}
      {TIME_TICKS.map(t => (
        <path key={t} d={`M${OX0 + t * 1480 + 0.5} ${OY0}V${OY1}`} />
      ))}
    </g>
    <rect x={OX0 + 0.5} y={OY0 + 0.5} width={OX1 - OX0} height={OY1 - OY0} fill="none" stroke="#5a5a5a" />
    <path d={WAVE.tips} stroke={CYAN} strokeWidth="1.1" />
    <path d={WAVE.body} stroke={MAGENTA} strokeWidth="1" />
    <MiMark x={1538} y={201} />
    {VOLT_TICKS.map((v, i) => (
      <g key={v}>
        <Tick x={56} y={OY0 + i * OSTEP + 4} $c={CYAN} $anchor="end">{v}</Tick>
        <Tick x={1541} y={OY0 + i * OSTEP + 4} $c={MAGENTA} $anchor="start">{v}</Tick>
      </g>
    ))}
    {TIME_TICKS.map(t => (
      <Tick key={t} x={OX0 + t * 1480} y={451}>{t}</Tick>
    ))}
    <Tick x={OX1} y={451}>1</Tick>
    <Tick x={1548} y={461}>s</Tick>
    <Tick x={800} y={461}>WAVEFORM</Tick>
    <Tick x={11} y={461} $anchor="start">+19:49:</Tick>
  </Plot>
);

const SpecPlot = () => (
  <Plot viewBox="10 534 1577 291" preserveAspectRatio="none">
    <g stroke="#5a5a5a" strokeDasharray="4 4" fill="none">
      {DB_TICKS.slice(1, -1).map((_, i) => (
        <path key={i} d={`M${SX0} ${SY0 + (i + 1) * 25 + 0.5}H${SX1}`} />
      ))}
      {LOG_GRID.map(f => (
        <path key={f} d={`M${Math.round(fx(f)) + 0.5} ${SY0}V${SY1}`} />
      ))}
    </g>
    <rect x={SX0 + 0.5} y={SY0 + 0.5} width={SX1 - SX0} height={SY1 - SY0} fill="none" stroke="#5a5a5a" />
    <path d={`M${SX0} ${dy(-85.87).toFixed(1)}H${fx(20000)}`} stroke={CYAN} strokeDasharray="4 3" />
    <path d={`M${SX0} ${dy(-87.7).toFixed(1)}H${fx(20000)}`} stroke={MAGENTA} strokeDasharray="4 3" />
    <path d={SPEC_CYAN} stroke={CYAN} fill="none" strokeWidth="1" />
    <path d={SPEC_MAGENTA} stroke={MAGENTA} fill="none" strokeWidth="1" />
    <path d={SPIKES} stroke={MAGENTA} fill="none" strokeWidth="1.2" />
    <MiMark x={1538} y={561} />
    {DB_TICKS.map((v, i) => (
      <g key={v}>
        <Tick x={56} y={SY0 + i * 25 + 4} $c={CYAN} $anchor="end">{v}</Tick>
        <Tick x={1541} y={SY0 + i * 25 + 4} $c={MAGENTA} $anchor="start">{v}</Tick>
      </g>
    ))}
    {SPEC_X.map(([label, f]) => (
      <Tick key={label} x={fx(f)} y={809}>{label}</Tick>
    ))}
    <Tick x={11} y={819} $anchor="start">FFT Segments:&lt;1</Tick>
    <Tick x={119} y={819} $anchor="start">Resolution: 0.732422Hz</Tick>
    <Tick x={799} y={819}>AMPLITUDE SPECTRUM in dBV (Vr=1 Vrms)</Tick>
    <Tick x={1548} y={823} $anchor="start">Hz</Tick>
  </Plot>
);

const WinGlyph = ({ kind }: { kind: 'min' | 'max' | 'close' }) => (
  <svg width="16" height="12" viewBox="0 0 16 12">
    {kind === 'min' && <rect x="3" y="7.5" width="10" height="3" fill="#fff" stroke="#4a5a6a" />}
    {kind === 'max' && <>
      <rect x="3" y="1.5" width="10" height="8" fill="none" stroke="#fff" strokeWidth="3" />
      <rect x="3" y="1.5" width="10" height="8" fill="none" stroke="#4a5a6a" />
    </>}
    {kind === 'close' && <>
      <path d="M3.500 1.500L12.500 10.500M12.500 1.500L3.500 10.500" stroke="#5a4a50" strokeWidth="3.600" />
      <path d="M3.500 1.500L12.500 10.500M12.500 1.500L3.500 10.500" stroke="#fff" strokeWidth="2.200" />
    </>}
  </svg>
);
const WinControls = ({ dim }: { dim?: boolean }) => (
  <WinButtons>
    <WinButton $dim={dim}><WinGlyph kind="min" /></WinButton>
    <WinButton $dim={dim}><WinGlyph kind="max" /></WinButton>
    <WinButton $dim={dim} $close={!dim}><WinGlyph kind="close" /></WinButton>
  </WinButtons>
);

const SignalGenerator = () => (
  <Dialog>
    <DialogTitle>
      <GenIcon />
      <DialogName>Signal Gener...</DialogName>
      <DialogCaption $w={28}><Glyph c="#8c8c8c" d="M0 5.500h10" /></DialogCaption>
      <DialogCaption $w={62}><Glyph c="#d0d0d0" d="M.5.500h9v9h-9z" /></DialogCaption>
      <DialogCaption $w={30}><Glyph c="#8c8c8c" d="M0 0L10 10M10 0L0 10" /></DialogCaption>
    </DialogTitle>

    <DRow $h={23} $mt={2}>
      <Check ml={6} on />
      <DLabel $ml={6} $w={64}>Show Editor</DLabel>
      <DCombo w={125}>No Loopback</DCombo>
      <PushButton $w={23} $h={23} $ml={4}>
        <svg width="11" height="11"><rect width="11" height="11" fill="#00ff00" /></svg>
      </PushButton>
    </DRow>
    <DRow $h={19} $mt={5}>
      <DLabel $ml={4} $w={92} $dim>Start OSC after (s)</DLabel>
      <EditBox $w={66} $h={19} $off>0</EditBox>
      <Check ml={4} off />
      <DLabel $ml={5} $dim>Echo Only</DLabel>
    </DRow>
    <DRow $h={46} $mt={7} $top>
      <Fieldset>
        <legend>Sampling Parameters</legend>
        <FieldRow>
          <DCombo w={98}>48kHz</DCombo>
          <DCombo w={43} ml={3}>A&amp;B</DCombo>
          <DCombo w={51} ml={3}>24Bit</DCombo>
        </FieldRow>
      </Fieldset>
      <ButtonStack>
        <PushButton $w={23}><SaveIcon dim /></PushButton>
        <PushButton $w={23} $mt={2}><NotesIcon /></PushButton>
      </ButtonStack>
    </DRow>
    <DRow $h={20} $mt={8}>
      <DCombo w={84} ml={11}>Sine</DCombo>
      <PushButton $w={23} $h={20} $ml={13}>...</PushButton>
      <DCombo w={84} ml={13}>Sine</DCombo>
    </DRow>
    <DRow $h={20} $mt={10}>
      <EditBox $w={61} $ml={3}>0</EditBox>
      <Spin ml={2} />
      <DLabel $ml={7} $w={69}>DC Offset (V)</DLabel>
      <EditBox $w={61}>0</EditBox>
      <Spin ml={2} />
    </DRow>
    <Mid>
      <SliderPair $w={35} $start={9} $gap={13}>
        <VTrack><Thumb $pos={103} /></VTrack>
        <VTrack><Thumb $pos={125} /></VTrack>
      </SliderPair>
      <MidCenter>
        <MidLabel $mt={0}>Output Frequency (Hz)</MidLabel>
        <ComboPair $mt={5}>
          <DCombo w={87}>5k</DCombo>
          <DCombo w={87}>5k</DCombo>
        </ComboPair>
        <MidLabel $mt={10}>Output Amplitude (V)</MidLabel>
        <ComboPair $mt={8}>
          <DCombo w={87}>0.5</DCombo>
          <DCombo w={87}>0.5</DCombo>
        </ComboPair>
        <MidLabel $mt={10}>Output Phase Difference (Degree)</MidLabel>
        <ComboPair $mt={7}>
          <DCombo w={73} ml={48}>0</DCombo>
        </ComboPair>
      </MidCenter>
      <SliderPair $w={31} $start={7} $gap={11}>
        <VTrack><Thumb $pos={125} /></VTrack>
        <VTrack><Thumb $pos={103} /></VTrack>
      </SliderPair>
    </Mid>
    <DRow $h={14} $pr={6}>
      <DLabel $ml={4} $w={43}>-9.03dBV</DLabel>
      <HTrack><HThumb /></HTrack>
      <DLabel $auto>-9.03dBV</DLabel>
    </DRow>

    <Group $mt={7} $h={45} $pt={1} $cols="92px 73px 65px" $rows="19px 20px">
      <Cell><Check ml={7} /><DLabel $ml={6}>Mask</DLabel></Cell>
      <Cell $center $dim>On (s)</Cell>
      <Cell $center $dim>Off (s)</Cell>
      <Cell><Check ml={7} off on /><DLabel $ml={6} $dim>Phase Lock</DLabel></Cell>
      <EditBox $w={65} $off>1</EditBox>
      <EditBox $w={65} $off>0</EditBox>
    </Group>
    <Group $mt={6} $h={45} $pt={1} $cols="92px 73px 65px" $rows="18px 21px">
      <Cell $span><Check ml={7} /><DLabel $ml={6}>Fade</DLabel></Cell>
      <Cell $center $dim>In (s)</Cell>
      <Cell $center $dim>Out (s)</Cell>
      <EditBox $w={65} $off>0.01</EditBox>
      <EditBox $w={65} $off>0.01</EditBox>
    </Group>
    <Group $mt={5} $h={46} $pt={1} $gap={2} $cols="75px 81px 70px" $rows="18px 20px">
      <DLabel $ml={2}>Modulation</DLabel>
      <DLabel $dim>Carrier (Hz)</DLabel>
      <DLabel $dim $ml={-5}>Mod. Index (%)</DLabel>
      <DCombo w={57} ml={2}>NIL</DCombo>
      <EditBox $w={65} $off>0</EditBox>
      <EditBox $w={65} $off>0</EditBox>
    </Group>

    <DRow $h={20} $mt={7}>
      <DLabel $ml={2} $w={64}>Duration (s)</DLabel>
      <EditBox $w={65} $off>1</EditBox>
      <Check ml={7} on />
      <DLabel $ml={6} $w={38}>Loop</DLabel>
      <Check off />
      <DLabel $ml={6} $dim>DDS</DLabel>
    </DRow>
    <DRow $h={18} $mt={5}>
      <Check ml={2} />
      <DLabel $ml={6} $w={60}>Sweep</DLabel>
      <RadioDot><i /></RadioDot>
      <DLabel $ml={4} $w={64} $dim>Frequency</DLabel>
      <RadioDot />
      <DLabel $ml={5} $dim>Amplitude</DLabel>
    </DRow>
  </Dialog>
);

export default function App() {
  return (
    <Page>
      <GlobalStyle />
      <TitleBar>
        <MiLogo />
        <TitleText>{'Multi-Instrument Pro 3.8   -    [+UDP+DHS]   -     <RTX6001 ASIO>'}</TitleText>
        <CaptionButtons>
          <CaptionButton><Glyph d="M0 5.500h10" /></CaptionButton>
          <CaptionButton><Glyph d="M.5 2.500h7v7h-7zM2.500 2.500v-2h7v7h-2" /></CaptionButton>
          <CaptionButton><Glyph d="M0 0L10 10M10 0L0 10" /></CaptionButton>
        </CaptionButtons>
      </TitleBar>
      <MenuBar>
        <span>File</span><span>Setting</span><span>Instrument</span><span>Window</span><span>Help</span>
      </MenuBar>

      <ToolRow $h={24} $line="2px solid #a8a8a8">
        <IconCell $w={16} $ml={10}><FolderOpenIcon /></IconCell>
        <IconCell $w={15} $ml={7}><SaveIcon /></IconCell>
        <BarLabel $w={92} $ml={4}>Trigger</BarLabel>
        <Combo w={114}>Single</Combo>
        <Combo w={77} ml={3}>A</Combo>
        <Combo w={78} ml={4}>Up</Combo>
        <EditBox $w={72} $h={22} $ml={2} $big>0%</EditBox>
        <Spin ml={1} h={22} />
        <EditBox $w={72} $h={22} $ml={13} $big>0%</EditBox>
        <Spin ml={1} h={22} />
        <Combo w={79} ml={15}>NIL</Combo>
        <BarLabel $w={89} $ml={2}>Sample</BarLabel>
        <Combo w={160}>48kHz</Combo>
        <Combo w={90} ml={2}>A&amp;B</Combo>
        <Combo w={98} ml={2}>24Bit</Combo>
        <BarLabel $w={70} $ml={2}>Point</BarLabel>
        <Combo w={148} off>48000</Combo>
        <Check ml={3} />
        <BarLabel $w={65} $ml={7}>Roll</BarLabel>
        <BoldButton $w={82}>Record</BoldButton>
        <BoldButton $w={53} $ml={2}>Auto</BoldButton>
      </ToolRow>

      <ToolRow $h={25}>
        <IconCell $w={12} $ml={11}>
          <svg width="12" height="12"><circle cx="6" cy="6" r="6" fill="#f01010" /></svg>
        </IconCell>
        <IconCell $w={21} $ml={6} $on><OscIcon /></IconCell>
        <IconCell $w={20} $ml={3} $on><SpecIcon /></IconCell>
        <IconCell $w={16} $ml={5}><SgramIcon /></IconCell>
        <IconCell $w={22} $ml={27} $on><GenIcon /></IconCell>
        <IconCell $w={18} $ml={3}><DutIcon /></IconCell>
        <IconCell $w={16} $ml={29}><DdpIcon /></IconCell>
        <ToolSep $ml={6} />
        <IconCell $w={14} $ml={6}><FunnelIcon /></IconCell>
        <IconCell $w={18} $ml={7}><TrigIcon name="A" /></IconCell>
        <IconCell $w={18} $ml={5}><TrigIcon name="B" /></IconCell>
        <IconCell $w={16} $ml={6}><ProbeIcon /></IconCell>
        <IconCell $w={17} $ml={7}><SpeakerIcon /></IconCell>
        <IconCell $w={15} $ml={8}><PlayIcon /></IconCell>
        <IconCell $w={15} $ml={7}><PlayIcon loop /></IconCell>
        <Combo w={85} ml={5} dark color={CYAN}>AC</Combo>
        <Combo w={85} ml={3} dark color={MAGENTA}>AC</Combo>
        <Combo w={177} ml={2} dark color={CYAN}>±4.472V</Combo>
        <Combo w={177} ml={3} dark color={MAGENTA}>±4.472V</Combo>
        <BarLabel $w={77} $ml={2}>Probe</BarLabel>
        <Combo w={55} dark color={CYAN}>1</Combo>
        <Combo w={56} ml={3} dark color={MAGENTA}>1</Combo>
        <Meter>
          <MeterRow $fill={172} $color={CYAN}>36%(-9.0 dBFS)</MeterRow>
          <MeterRow $fill={172} $color={MAGENTA}>36%(-9.1 dBFS)</MeterRow>
        </Meter>
      </ToolRow>

      <TabRow>
        {TABS.map(t => <span key={t}>{t}</span>)}
      </TabRow>

      <Mdi>
        <Child $h={359} $frame="#eef1f4">
          <ChildTitle $h={32} $bg="linear-gradient(#bccddc, #d8e6f2)">
            <OscIcon />
            <ChildName $dim>Osc</ChildName>
            <WinControls dim />
          </ChildTitle>
          <Scope>
            <OscRow color={CYAN} vals={['A: Max=', '1.5831445', '-1.5796559', '-2.83', '1.11805326']} />
            <OscRow color={MAGENTA} axis vals={['B: Max=', '1.5688962', '-1.5649509', '2.43', '1.10787597']} />
            <OscPlot />
          </Scope>
        </Child>
        <Child $h={357} $frame="#b9d1ea">
          <ChildTitle $h={30} $bg="linear-gradient(#a5bdd6, #b9d3ec)">
            <SpecIcon />
            <ChildName>Spe</ChildName>
            <WinControls />
          </ChildTitle>
          <SpecScope>
            <SpecRow color={CYAN} vals={['A:', '0.1092', '-59.23', '0.1093', '-59.23', '59.23', '86.84', '-85.87']} />
            <SpecRow color={MAGENTA} axis vals={['B:', '0.1246', '-58.09', '0.1247', '-58.08', '58.08', '88.59', '-87.70']} />
            <SpecPlot />
          </SpecScope>
        </Child>
      </Mdi>

      <BottomBar>
        <BarLabel $w={17} $ml={13} $size={13}>F</BarLabel>
        <Combo w={125} fs={13}>Auto</Combo>
        <Combo w={98} ml={3} fs={13}>x1</Combo>
        <BarLabel $w={18} $ml={2} $size={13}>A</BarLabel>
        <Combo w={127} fs={13} dark color={CYAN}>&lt;200dB&gt;</Combo>
        <Combo w={90} ml={3} fs={13} dark color={CYAN}>Off</Combo>
        <BarLabel $w={22} $ml={1} $size={13}>M</BarLabel>
        <Combo w={255} fs={13}>Amplitude Spectrum</Combo>
        <BarLabel $w={19} $ml={2} $size={13}>B</BarLabel>
        <Combo w={126} fs={13} dark color={MAGENTA}>&lt;200dB&gt;</Combo>
        <Combo w={91} ml={3} fs={13} dark color={MAGENTA}>Off</Combo>
        <BarLabel $w={40} $size={13}>FFT</BarLabel>
        <Combo w={131} fs={13}>65536</Combo>
        <BarLabel $w={63} $size={13}>WND</BarLabel>
        <Combo w={248} fs={13}>Kaiser 6</Combo>
        <Combo w={99} ml={3} fs={13} off>0%</Combo>
      </BottomBar>

      <Taskbar>
        <StartCell><WindowsLogo /></StartCell>
        <SearchBox>
          <Search size={18} strokeWidth={1.2} color="#222" style={{ transform: 'scaleX(-1)' }} />
          Type here to search
        </SearchBox>
        <TaskCell>
          <svg width="16" height="16"><circle cx="8" cy="8" r="6.500" fill="none" stroke="#fff" strokeWidth="2" /></svg>
        </TaskCell>
        <TaskCell><TaskView /></TaskCell>
        <TaskCell><Opera /></TaskCell>
        <TaskCell><FolderApp /></TaskCell>
        <TaskCell><Palette /></TaskCell>
        <TaskCell $active><Snip /></TaskCell>
        <TaskCell><Calc /></TaskCell>
        <TaskCell><RedAt /></TaskCell>
        <TaskCell><DocApp /></TaskCell>
        <TaskCell><Gauge /></TaskCell>
        <TaskCell $active $lit><MiTask /></TaskCell>
        <Tray>
          <CloudIcon />
          <TrayText>32°F Cloudy</TrayText>
          <TrayIcon $ml={12}><ChevronUp size={18} strokeWidth={1.3} /></TrayIcon>
          <TrayIcon $ml={9}><CameraTray /></TrayIcon>
          <TrayIcon $ml={8}><NetTray /></TrayIcon>
          <TrayIcon $ml={7}><Volume2 size={18} strokeWidth={1.2} /></TrayIcon>
          <Clock>7:50 PM<br />1/6/2022</Clock>
          <NotifyCell><NotifyIcon /></NotifyCell>
        </Tray>
      </Taskbar>

      <SignalGenerator />
    </Page>
  );
}
